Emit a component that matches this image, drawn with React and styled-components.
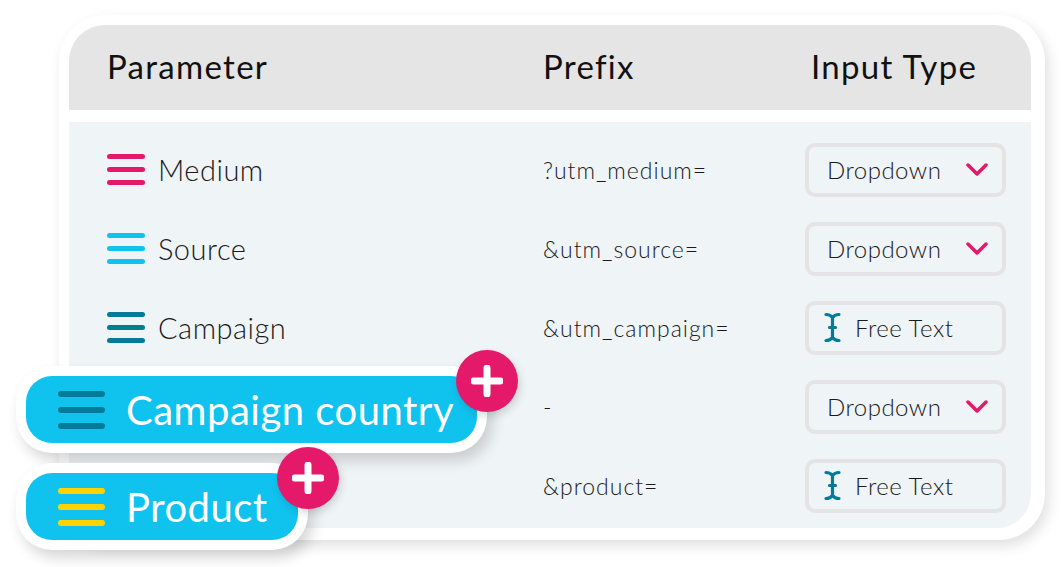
import React from "react";
import styled, { createGlobalStyle } from "styled-components";

const GlobalStyle = createGlobalStyle`
  html, body {
    margin: 0;
    padding: 0;
    background: #ffffff;
  }
  body {
    font-family: Lato, "Open Sans", sans-serif;
  }
`;

const PINK = "#e5196a";
const SKY = "#10c3ef";
const TEAL = "#027b98";
const YELLOW = "#ffd300";

const Stage = styled.div`
  position: relative;
  width: 1061px;
  height: 567px;
  overflow: hidden;
  padding: 15px 0 0 59px;
  box-sizing: border-box;
`;

const Card = styled.div`
  width: 986px;
  box-sizing: border-box;
  padding: 10px 14px 12px 10px;
  background: #ffffff;
  border-radius: 46px;
  box-shadow: 4px 6px 14px rgba(0, 0, 0, 0.12);
`;

const Header = styled.div`
  display: grid;
  grid-template-columns: 436px 262px 1fr;
  align-items: center;
  height: 85px;
  padding-left: 38px;
  background: #e5e5e5;
  border-radius: 36px 36px 0 0;
  margin-bottom: 12px;
`;

const HeadCell = styled.div`
  font-size: 33px;
  font-weight: 400;
  letter-spacing: 1.3px;
  color: #111;
  padding-left: ${(p) => p.$indent || 0}px;
  padding-bottom: 4px;
`;

const Body = styled.div`
  background: #eff4f7;
  border-radius: 0 0 34px 34px;
  padding: 8px 0 3px 38px;
`;

const Row = styled.div`
  display: grid;
  grid-template-columns: 436px 262px 201px;
  align-items: center;
  height: 79px;
`;

const ParamCell = styled.div`
  display: flex;
  align-items: center;
  gap: 13px;
  font-size: 29px;
  font-weight: 300;
  letter-spacing: 0.5px;
  color: #1a1a1a;
`;

const PrefixCell = styled.div`
  font-size: 23px;
  font-weight: 300;
  letter-spacing: 1px;
  color: #1a1a1a;
`;

const InputBox = styled.div`
  display: flex;
  align-items: center;
  height: 54px;
  box-sizing: border-box;
  border: 4px solid #e4e4e4;
  border-radius: 10px;
  padding: 0 14px 0 ${(p) => (p.$free ? 15 : 18)}px;
  gap: 14px;
  font-size: 24px;
  font-weight: 300;
  letter-spacing: 0.5px;
  color: #1a1a1a;
`;

const BoxLabel = styled.span`
  flex: 1;
`;

const Bars = styled.svg`
  display: block;
  flex: none;
`;

const Pill = styled.div`
  position: absolute;
  left: 16px;
  top: ${(p) => p.$top}px;
  padding: 10px;
  background: #ffffff;
  border-radius: 36px;
  box-shadow: 5px 8px 14px rgba(0, 0, 0, 0.16);
`;

const PillInner = styled.div`
  display: flex;
  align-items: center;
  gap: 21px;
  width: ${(p) => p.$width}px;
  height: 67px;
  box-sizing: border-box;
  padding-left: 32px;
  background: ${SKY};
  border-radius: 26px;
  color: #ffffff;
  font-size: 40px;
  font-weight: 400;
  letter-spacing: 0.5px;
`;

const Badge = styled.div`
  position: absolute;
  right: -31px;
  top: -16px;
  width: 62px;
  height: 62px;
  border-radius: 50%;
  background: ${PINK};
  display: flex;
  align-items: center;
  justify-content: center;
  box-shadow: 2px 4px 8px rgba(0, 0, 0, 0.15);
`;

function Burger({ color, width = 38, bar = 5, gap = 13 }) {
  return (
    <Bars width={width} height={bar + gap * 2} viewBox={`0 0 ${width} ${bar + gap * 2}`}>
      {[0, 1, 2].map((i) => (
        <line
          key={i}
          x1={bar / 2}
          x2={width - bar / 2}
          y1={bar / 2 + i * gap}
          y2={bar / 2 + i * gap}
          stroke={color}
          strokeWidth={bar}
          strokeLinecap="round"
        />
      ))}
    </Bars>
  );
}

function Chevron() {
  return (
    <svg width="22" height="14" viewBox="0 0 22 14">
      <path d="M2 2 L11 11 L20 2" fill="none" stroke={PINK} strokeWidth="3.5" strokeLinecap="round" strokeLinejoin="round" />
    </svg>
  );
}

function IBeam() {
  return (
    <svg width="17" height="31" viewBox="0 0 17 31" style={{ flex: "none" }}>
      <path
        d="M2 2.5 C5 2.5 7 3.5 8.5 5.5 C10 3.5 12 2.5 15 2.5 M8.5 5.5 V25.5 M2 28.5 C5 28.5 7 27.5 8.5 25.5 C10 27.5 12 28.5 15 28.5 M5.5 15.5 H11.5"
        fill="none"
        stroke={TEAL}
        strokeWidth="3.2"
        strokeLinecap="round"
      />
    </svg>
  );
}

function Plus() {
  return (
    <svg width="32" height="32" viewBox="0 0 32 32">
      <path d="M16 3 V29 M3 16 H29" stroke="#fff" strokeWidth="7" strokeLinecap="round" />
    </svg>
  );
}

const rows = [
  { name: "Medium", color: PINK, prefix: "?utm_medium=", type: "dropdown" },
  { name: "Source", color: SKY, prefix: "&utm_source=", type: "dropdown" },
  { name: "Campaign", color: TEAL, prefix: "&utm_campaign=", type: "free" },
  { name: null, prefix: "-", type: "dropdown" },
  { name: null, prefix: "&product=", type: "free" },
];

const pills = [
  { label: "Campaign country", color: TEAL, top: 366, width: 451 },
  { label: "Product", color: YELLOW, top: 463, width: 272 },
];

export default function App() {
  return (
    <>
      <GlobalStyle />
      <Stage>
        <Card>
          <Header>
            <HeadCell>Parameter</HeadCell>
            <HeadCell>Prefix</HeadCell>
            <HeadCell $indent={6}>Input Type</HeadCell>
          </Header>
          <Body>
            {rows.map((r, i) => (
              <Row key={i}>
                <ParamCell>
                  {r.name && (
                    <>
                      <Burger color={r.color} />
                      {r.name}
                    </>
                  )}
                </ParamCell>
                <PrefixCell>{r.prefix}</PrefixCell>
                {r.type === "dropdown" ? (
                  <InputBox>
                    <BoxLabel>Dropdown</BoxLabel>
                    <Chevron />
                  </InputBox>
                ) : (
                  <InputBox $free>
                    <IBeam />
                    <BoxLabel>Free Text</BoxLabel>
                  </InputBox>
                )}
              </Row>
            ))}
          </Body>
        </Card>
        {pills.map((p) => (
          <Pill key={p.label} $top={p.top}>
            <PillInner $width={p.width}>
              <Burger color={p.color} width={47} bar={6} gap={16} />
              {p.label}
            </PillInner>
            <Badge>
              <Plus />
            </Badge>
          </Pill>
        ))}
      </Stage>
    </>
  );
}
